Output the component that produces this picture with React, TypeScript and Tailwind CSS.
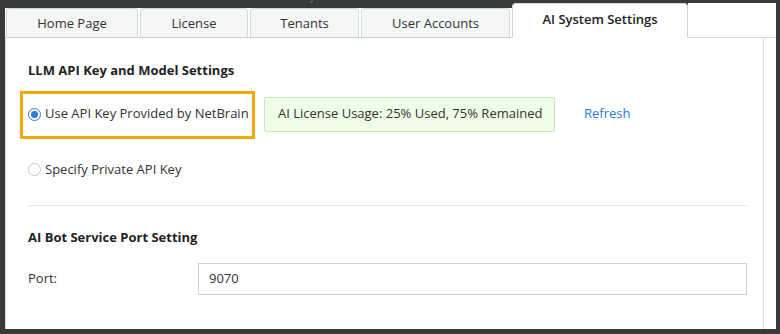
import React from 'react';

const tabs = [
  { label: 'Home Page', width: 'w-[132px]' },
  { label: 'License', width: 'w-[108px]' },
  { label: 'Tenants', width: 'w-[109px]' },
  { label: 'User Accounts', width: 'w-[149px]' },
];

const Radio: React.FC<{ checked?: boolean }> = ({ checked }) => (
  <span
    className={`flex h-[13px] w-[13px] shrink-0 items-center justify-center rounded-full border ${
      checked ? 'border-[#2f7de1]' : 'border-[#c4c4c4]'
    } bg-white`}
  >
    {checked && <span className="h-[7px] w-[7px] rounded-full bg-[#2f7de1]" />}
  </span>
);

const App: React.FC = () => {
  return (
    <div
      className="flex h-[334px] w-[780px] flex-col overflow-hidden bg-[#3a3a3a] pb-[5px] pl-[5px] pr-[4px] text-[13px] text-[#333]"
      style={{ fontFamily: '"Open Sans", "Liberation Sans", sans-serif' }}
    >
      {/* clipped caption from the page behind */}
      <div className="h-[3px] shrink-0 overflow-hidden pl-[75px]">
        <div className="-mt-[15px] text-[16px] leading-[18px] text-[#6e6e6e]">1.1.1 NetBrain Provided API Key</div>
      </div>

      {/* Tab row */}
      <div className="flex h-[35px] shrink-0">
        <div className="flex items-end gap-[2px] border-b border-[#cfd5d9] bg-[linear-gradient(to_bottom,#3a3a3a_5px,#ffffff_5px)] pl-[1px]">
          {tabs.map((t) => (
            <div
              key={t.label}
              className={`flex h-[29px] ${t.width} items-center justify-center rounded-t-[4px] border border-b-0 border-[#d3d8db] bg-[#f5f6f6] pt-[1px]`}
            >
              {t.label}
            </div>
          ))}
          <div className="-mb-px flex h-[35px] w-[176px] items-center justify-center rounded-t-[4px] border border-b-0 border-[#cfd5d9] bg-white pb-[2px] font-semibold text-[#222]">
            AI System Settings
          </div>
        </div>
        <div className="flex-1 border-b border-[#cfd5d9] bg-white" />
      </div>

      {/* Body */}
      <div className="flex flex-1 bg-white pr-[12px]">
        <div className="flex flex-1 flex-col border-x border-[#dcdcdc] pl-[22px] pr-[16px] pt-[23px]">
          <div className="font-bold leading-[18px] text-[#222]">LLM API Key and Model Settings</div>

          <div className="mt-[12px] flex items-center">
            <div className="-ml-[8px] flex h-[48px] w-[235px] items-center gap-[4px] border-[3px] border-[#f5a800] pb-[2px] pl-[5px]">
              <Radio checked />
              <span className="whitespace-nowrap">Use API Key Provided by NetBrain</span>
            </div>
            <div className="ml-[9px] mb-[2px] flex h-[35px] w-[291px] items-center rounded-[2px] border border-[#c8edb4] bg-[#effde8] pl-[13px]">
              AI License Usage: 25% Used, 75% Remained
            </div>
            <span className="ml-[29px] mb-[2px] text-[#2b7cd3]">Refresh</span>
          </div>

          <div className="mt-[21px] flex h-[18px] items-center gap-[4px]">
            <Radio />
            <span className="leading-[18px]">Specify Private API Key</span>
          </div>

          <div className="mt-[27px] h-px bg-[#e6e6e6]" />

          <div className="mt-[22px] font-bold leading-[18px] text-[#222]">AI Bot Service Port Setting</div>

          <div className="mt-[17px] flex items-center">
            <span className="w-[170px]">Port:</span>
            <div className="flex h-[32px] flex-1 items-center border border-[#d0d0d0] pl-[10px]">9070</div>
          </div>
        </div>
      </div>
    </div>
  );
};

export default App;
